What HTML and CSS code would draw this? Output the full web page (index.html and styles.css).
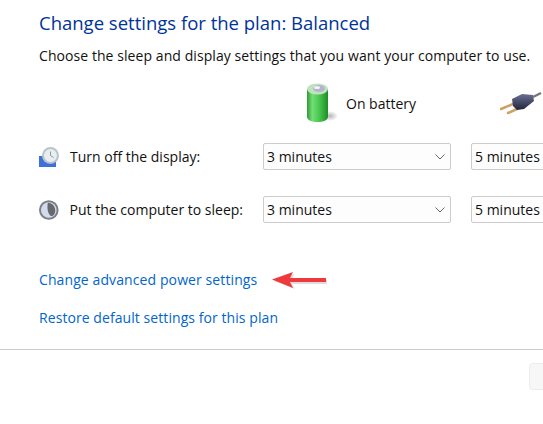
FILE: index.html
```html
<!DOCTYPE html>
<html lang="en">
<head>
    <meta charset="UTF-8">
    <title>Edit Plan Settings</title>
    <link rel="stylesheet" href="styles.css">
</head>
<body>
    <div class="content">
        <h1 class="title">Change settings for the plan: Balanced</h1>
        <p class="intro">Choose the sleep and display settings that you want your computer to use.</p>

        <!-- Column headers -->
        <div class="plan-grid head-row">
            <div></div>
            <div class="col-head battery-head">
                <svg width="31" height="40" viewBox="0 0 31 40">
                    <defs>
                        <linearGradient id="batteryBody" x1="0" x2="1" y1="0" y2="0">
                            <stop offset="0" stop-color="#2c9a33"/>
                            <stop offset="0.25" stop-color="#74de76"/>
                            <stop offset="0.6" stop-color="#46c54e"/>
                            <stop offset="1" stop-color="#1e8c28"/>
                        </linearGradient>
                        <radialGradient id="batteryShadow">
                            <stop offset="0" stop-color="#b5b5b5"/>
                            <stop offset="1" stop-color="#fff"/>
                        </radialGradient>
                    </defs>
                    <ellipse cx="23" cy="33" rx="8" ry="5" fill="url(#batteryShadow)"/>
                    <path d="M0 6v28c0 3 5 5 10.500 5s10.500-2 10.500-5V6z" fill="url(#batteryBody)"/>
                    <ellipse cx="10.500" cy="6" rx="10.500" ry="5.500" fill="#bfe3bf"/>
                    <ellipse cx="12" cy="5.500" rx="6" ry="3.500" fill="#b4b4cc"/>
                    <ellipse cx="10" cy="4.500" rx="3" ry="1.500" fill="#f2f2f8"/>
                </svg>
                <span>On battery</span>
            </div>
            <div class="col-head plug-head">
                <svg width="43" height="24" viewBox="0 0 43 24">
                    <defs>
                        <linearGradient id="plugBody" x1="0" x2="0" y1="0" y2="1">
                            <stop offset="0" stop-color="#6a7096"/>
                            <stop offset="1" stop-color="#22253a"/>
                        </linearGradient>
                    </defs>
                    <path d="M1 18l12-5M8 22l11-5" stroke="#cfa063" stroke-width="2.500" stroke-linecap="round"/>
                    <path d="M12 8l10-5 11 1 1 6-10 8-7 1-4-4z" fill="url(#plugBody)"/>
                    <path d="M33 6l8-4" stroke="#777" stroke-width="2.500"/>
                </svg>
            </div>
        </div>

        <!-- Turn off the display -->
        <div class="plan-grid setting-row">
            <div class="row-label">
                <svg width="20" height="20" viewBox="0 0 20 20">
                    <rect x="0" y="9" width="17" height="11" fill="#3f6fd8"/>
                    <circle cx="11.500" cy="8.500" r="8.500" fill="#b8c4cc"/>
                    <circle cx="11.500" cy="8.500" r="6.500" fill="#e8edf0"/>
                    <path d="M11.500 4.500v4l3 2" stroke="#8c98a3" stroke-width="1" fill="none"/>
                </svg>
                <span>Turn off the display:</span>
            </div>
            <div class="select-box">
                <span>3 minutes</span>
                <svg width="10" height="6" viewBox="0 0 10 6"><path d="M.5.5L5 5 9.500.5" fill="none" stroke="#666" stroke-width="1"/></svg>
            </div>
            <div class="select-box"><span>5 minutes</span></div>
        </div>

        <!-- Put the computer to sleep -->
        <div class="plan-grid setting-row">
            <div class="row-label">
                <svg width="20" height="20" viewBox="0 0 20 20">
                    <circle cx="10" cy="10" r="10" fill="#7d8087"/>
                    <circle cx="10" cy="10" r="8" fill="#d3dbec"/>
                    <path d="M9 2.500a8 8 0 0 1 7 11c-1 2-3 3-4 2.500-3-2-4-8-3-13.500z" fill="#68696e"/>
                </svg>
                <span>Put the computer to sleep:</span>
            </div>
            <div class="select-box">
                <span>3 minutes</span>
                <svg width="10" height="6" viewBox="0 0 10 6"><path d="M.5.5L5 5 9.500.5" fill="none" stroke="#666" stroke-width="1"/></svg>
            </div>
            <div class="select-box"><span>5 minutes</span></div>
        </div>

        <div class="link-row">
            <a class="link" href="#">Change advanced power settings</a>
            <svg width="55" height="18" viewBox="0 0 55 18">
                <path d="M2 10L22 3l-2 6h35v4H20l3 5z" fill="#bbb" opacity="0.5"/>
                <path d="M0 8.500L21 1l-3 6h36v4H18l3 6z" fill="#ee3a3c"/>
            </svg>
        </div>
        <a class="link restore" href="#">Restore default settings for this plan</a>
    </div>

    <div class="footer">
        <div class="save-btn"></div>
    </div>
</body>
</html>
```

FILE: styles.css
```css
body {
    margin: 0;
    background: #fff;
    font-family: "Open Sans", sans-serif;
    font-size: 14px;
    color: #111;
    overflow: hidden;
}

.content {
    padding: 11px 0 0 39px;
    height: 336px;
    box-sizing: border-box;
}

.title {
    margin: 0;
    font-size: 18.5px;
    line-height: 24px;
    font-weight: 400;
    color: #003399;
    white-space: nowrap;
}

.intro {
    margin: 11px 0 17px;
    line-height: 20px;
    letter-spacing: 0.07px;
    white-space: nowrap;
}

.plan-grid {
    display: grid;
    grid-template-columns: 204px 188px 188px;
    column-gap: 20px;
}

.head-row {
    height: 40px;
    margin-bottom: 20px;
}

.setting-row {
    height: 27px;
    margin-bottom: 26px;
}

.col-head {
    display: flex;
    align-items: center;
}

.battery-head {
    margin-left: 44px;
    gap: 8px;
}

.plug-head {
    margin-left: 29px;
}

.row-label {
    display: flex;
    align-items: center;
    gap: 11px;
    white-space: nowrap;
}

.select-box {
    display: flex;
    align-items: center;
    justify-content: space-between;
    padding: 0 5px 0 3px;
    background: #fdfdfd;
    border: 1px solid #ccc;
    border-radius: 2px;
    box-sizing: border-box;
    white-space: nowrap;
}

.link-row {
    display: flex;
    align-items: center;
    gap: 15px;
    margin-top: 47px;
}

.link {
    color: #0066cc;
    text-decoration: none;
    line-height: 20px;
    letter-spacing: 0.1px;
}

.restore {
    display: block;
    margin-top: 18px;
    letter-spacing: 0.07px;
}

.footer {
    border-top: 1px solid #ccc;
    margin-top: 13px;
    padding: 13px 0 0 529px;
}

.save-btn {
    width: 60px;
    height: 27px;
    background: #f7f7f7;
    border: 1px solid #ececec;
    border-radius: 4px;
    box-sizing: border-box;
}
```
